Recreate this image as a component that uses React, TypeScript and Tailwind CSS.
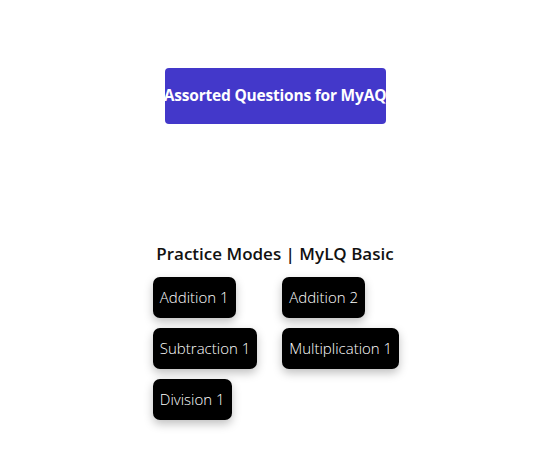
import React from "react";

const modes = [
  "Addition 1",
  "Addition 2",
  "Subtraction 1",
  "Multiplication 1",
  "Division 1",
];

export default function App() {
  return (
    <div
      className="min-h-[450px] w-full bg-white flex flex-col items-center"
      style={{ fontFamily: '"Open Sans", "Noto Sans", sans-serif' }}
    >
      <button className="mt-[68px] h-[56px] w-[221px] rounded-[4px] bg-[#4338ca] text-white font-bold text-[15.5px] whitespace-nowrap flex items-center justify-center tracking-[-0.2px]">
        Assorted Questions for MyAQ
      </button>

      <h2 className="mt-[120px] text-[17px] font-semibold text-[#111] leading-[20px]">
        Practice Modes | MyLQ Basic
      </h2>

      <div className="mt-[13px] ml-[2px] grid grid-cols-[auto_auto] gap-x-[25px] gap-y-[10px] justify-items-start">
        {modes.map((m) => (
          <button
            key={m}
            className="h-[41px] px-[7px] rounded-[7px] bg-black text-white text-[15px] font-light shadow-[0_4px_10px_rgba(0,0,0,0.25)] whitespace-nowrap"
          >
            {m}
          </button>
        ))}
      </div>
    </div>
  );
}
